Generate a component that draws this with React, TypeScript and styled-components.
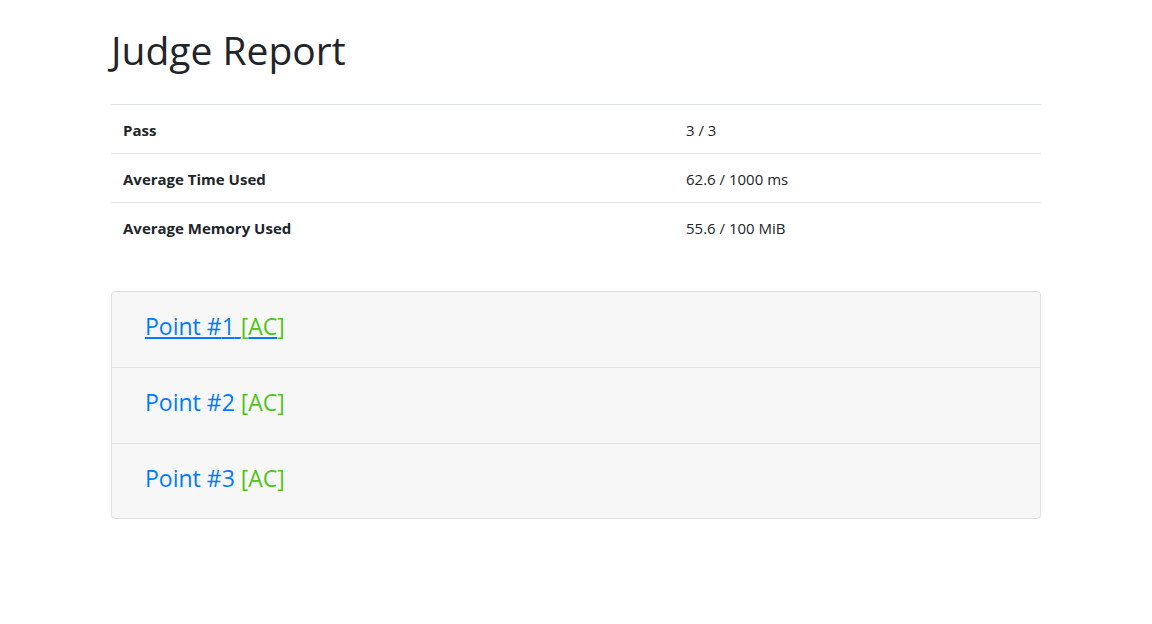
import React from "react";
import styled, { createGlobalStyle } from "styled-components";

const GlobalStyle = createGlobalStyle`
  * { box-sizing: border-box; }
  body {
    margin: 0;
    background: #fff;
    color: #212529;
    font-family: "Open Sans", "Noto Sans", "Liberation Sans", sans-serif;
    font-size: 15px;
    line-height: 1.5;
  }
`;

interface Point {
  id: number;
  status: string;
}

const stats = [
  { label: "Pass", value: "3 / 3" },
  { label: "Average Time Used", value: "62.6 / 1000 ms" },
  { label: "Average Memory Used", value: "55.6 / 100 MiB" },
];

const points: Point[] = [
  { id: 1, status: "AC" },
  { id: 2, status: "AC" },
  { id: 3, status: "AC" },
];

export default function App() {
  return (
    <>
      <GlobalStyle />
      <Container>
        <Title>Judge Report</Title>
        <Table>
          <tbody>
            {stats.map((s) => (
              <tr key={s.label}>
                <Th>{s.label}</Th>
                <Td>{s.value}</Td>
              </tr>
            ))}
          </tbody>
        </Table>
        <Card>
          {points.map((p, i) => (
            <PointRow key={p.id}>
              <PointLink href="#" $hover={i === 0}>
                Point #{p.id} <Status>[{p.status}]</Status>
              </PointLink>
            </PointRow>
          ))}
        </Card>
      </Container>
    </>
  );
}

const Container = styled.div`
  width: 960px;
  margin: 0 auto;
  padding: 26px 15px 0;
`;

const Title = styled.h1`
  margin: 0 0 30px;
  font-size: 39px;
  font-weight: 400;
  line-height: 48px;
`;

const Table = styled.table`
  width: 100%;
  border-collapse: collapse;
  margin-bottom: 40px;
`;

const Th = styled.th`
  width: 563px;
  text-align: left;
  font-weight: 700;
  padding: 13px 12px 11px;
  line-height: 24px;
  border-top: 1px solid #dee2e6;
  font-size: 15px;
`;

const Td = styled.td`
  padding: 13px 12px 11px;
  line-height: 24px;
  border-top: 1px solid #dee2e6;
  font-size: 15px;
`;

const Card = styled.div`
  display: flex;
  flex-direction: column;
  background: #f7f7f7;
  border: 1px solid #dfdfdf;
  border-radius: 4px;
`;

const PointRow = styled.div`
  padding: 20px 33px 26px;
  font-size: 23px;
  line-height: 29px;
  & + & {
    border-top: 1px solid #dfdfdf;
  }
  &:last-child {
    padding-bottom: 25px;
  }
`;

const PointLink = styled.a<{ $hover?: boolean }>`
  color: #007bff;
  text-decoration: ${(p) => (p.$hover ? "underline" : "none")};
`;

const Status = styled.span`
  color: #52c41a;
`;
